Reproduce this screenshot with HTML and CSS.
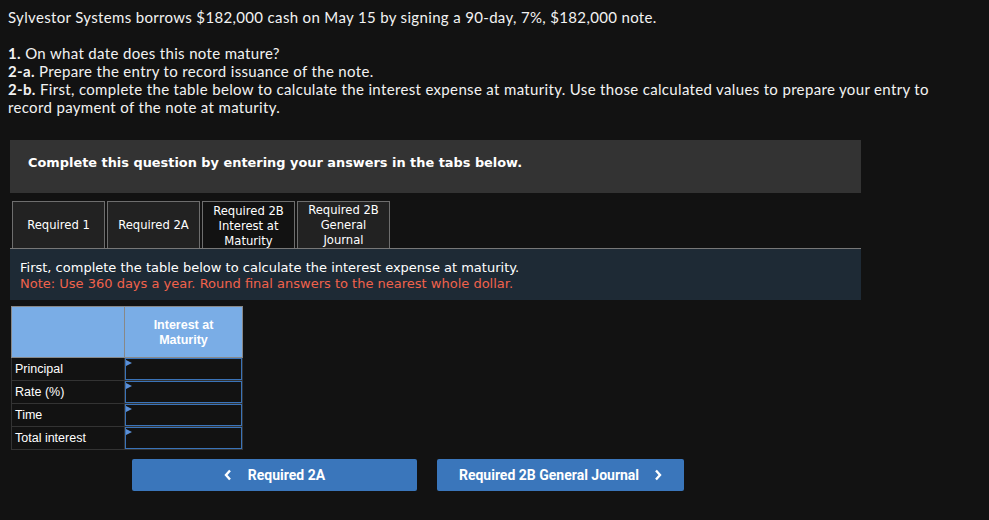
FILE: index.html
```html
<!DOCTYPE html>
<html>
<head>
<meta charset="utf-8">
<link rel="stylesheet" href="styles.css">
</head>
<body>
<div class="intro">
  <p>Sylvestor Systems borrows $182,000 cash on May 15 by signing a 90-day, 7%, $182,000 note.</p>
  <p class="reqs"><b>1.</b> On what date does this note mature?<br><b>2-a.</b> Prepare the entry to record issuance of the note.<br><b>2-b.</b> <span>First, complete the table below to calculate the interest expense at maturity. Use those calculated values to prepare your entry to</span><br><span>record payment of the note at maturity.</span></p>
</div>
<div class="box">
  <div class="banner">Complete this question by entering your answers in the tabs below.</div>
  <div class="tabs">
    <div class="tab">Required 1</div>
    <div class="tab">Required 2A</div>
    <div class="tab active">Required 2B Interest at Maturity</div>
    <div class="tab">Required 2B General Journal</div>
  </div>
  <div class="info">
    <div>First, complete the table below to calculate the interest expense at maturity.</div>
    <div class="note">Note: Use 360 days a year. Round final answers to the nearest whole dollar.</div>
  </div>
  <table class="grid">
    <thead>
      <tr><th class="blank"></th><th>Interest at<br>Maturity</th></tr>
    </thead>
    <tbody>
      <tr><td class="label">Principal</td><td class="cell"><div class="inp"></div></td></tr>
      <tr><td class="label">Rate (%)</td><td class="cell"><div class="inp"></div></td></tr>
      <tr><td class="label">Time</td><td class="cell"><div class="inp"></div></td></tr>
      <tr><td class="label">Total interest</td><td class="cell"><div class="inp"></div></td></tr>
    </tbody>
  </table>
  <div class="nav">
    <div class="btn"><svg class="chev left" width="8" height="12" viewBox="0 0 8 12"><polyline points="6,1.5 2,6 6,10.5" fill="none" stroke="#fff" stroke-width="2.4"/></svg>Required 2A</div>
    <div class="btn">Required 2B General Journal<svg class="chev right" width="8" height="12" viewBox="0 0 8 12"><polyline points="2,1.5 6,6 2,10.5" fill="none" stroke="#fff" stroke-width="2.4"/></svg></div>
  </div>
</div>
</body>
</html>
```
FILE: styles.css
```css
html, body { background: #121212; }
body {
  margin: 0;
  padding: 8px;
  color: #fff;
}
.intro { max-width: 960px; }
.intro p {
  margin: 0;
  font-family: Lato, "Open Sans", sans-serif;
  font-size: 15px;
  line-height: 18px;
  letter-spacing: 0.34px;
  color: #f2f2f2;
}
.intro b { font-weight: 700; display: inline-block; }
.intro .reqs { margin-top: 18px; }
.box {
  margin: 24px 0 0 2px;
  width: 851px;
}
.banner {
  height: 53px;
  background: #333;
  padding-left: 18px;
  display: flex;
  align-items: center;
  padding-bottom: 8px;
  box-sizing: border-box;
  font-family: "DejaVu Sans", Verdana, sans-serif;
  font-weight: bold;
  font-size: 12.9px;
  color: #fff;
}
.tabs {
  display: flex;
  gap: 2px;
  margin-top: 8px;
  padding-left: 2px;
}
.tab {
  box-sizing: border-box;
  width: 93px;
  height: 47px;
  border: 1px solid #6e6e6e;
  border-bottom: none;
  background: #222;
  display: flex;
  align-items: center;
  justify-content: center;
  text-align: center;
  padding: 0 6px;
  font-family: "DejaVu Sans", Verdana, sans-serif;
  font-size: 11.6px;
  line-height: 15px;
  color: #fff;
}
.tab.active { background: #121212; padding-top: 2px; }
.info {
  background: #1e2a35;
  border-top: 1px solid #777;
  padding: 11px 10px 0;
  box-sizing: border-box;
  height: 52px;
  font-family: "DejaVu Sans", Verdana, sans-serif;
  font-size: 13px;
  line-height: 16px;
  color: #fff;
}
.note { color: #f0624c; }
.grid {
  margin: 6px 0 0 1px;
  border-collapse: collapse;
  font-family: "Liberation Sans", Arial, sans-serif;
  font-size: 12.5px;
}
.grid th {
  background: #7aade6;
  height: 39px;
  border: 1px solid #888;
  color: #fff;
  font-weight: bold;
  font-size: 12.5px;
  line-height: 15px;
  vertical-align: top;
  padding: 11px 0 0;
  width: 117px;
}
.grid th.blank { width: 112px; }
.grid td {
  height: 22px;
  padding: 0;
  border: 1px solid #333;
}
.grid td.label {
  padding-left: 3px;
  color: #fff;
}
.grid td.cell { padding: 0; }
.inp {
  position: relative;
  box-sizing: border-box;
  height: 22px;
  border: 1px solid #3a73b8;
  background: #121212;
}
.inp::before {
  content: "";
  position: absolute;
  left: 0;
  top: 1px;
  border-left: 6px solid #5b8fd6;
  border-top: 3.5px solid transparent;
  border-bottom: 3.5px solid transparent;
}
.nav {
  display: flex;
  gap: 20px;
  margin: 9px 0 0 122px;
}
.btn {
  width: 285px;
  height: 32px;
  border-radius: 2px;
  background: #3a76bb;
  display: flex;
  align-items: center;
  justify-content: center;
  font-family: Roboto, "Liberation Sans", sans-serif;
  font-weight: bold;
  font-size: 14px;
  color: #fff;
}
.btn + .btn { width: 247px; }
.chev.left { margin-right: 16px; }
.chev.right { margin-left: 15px; }
```
